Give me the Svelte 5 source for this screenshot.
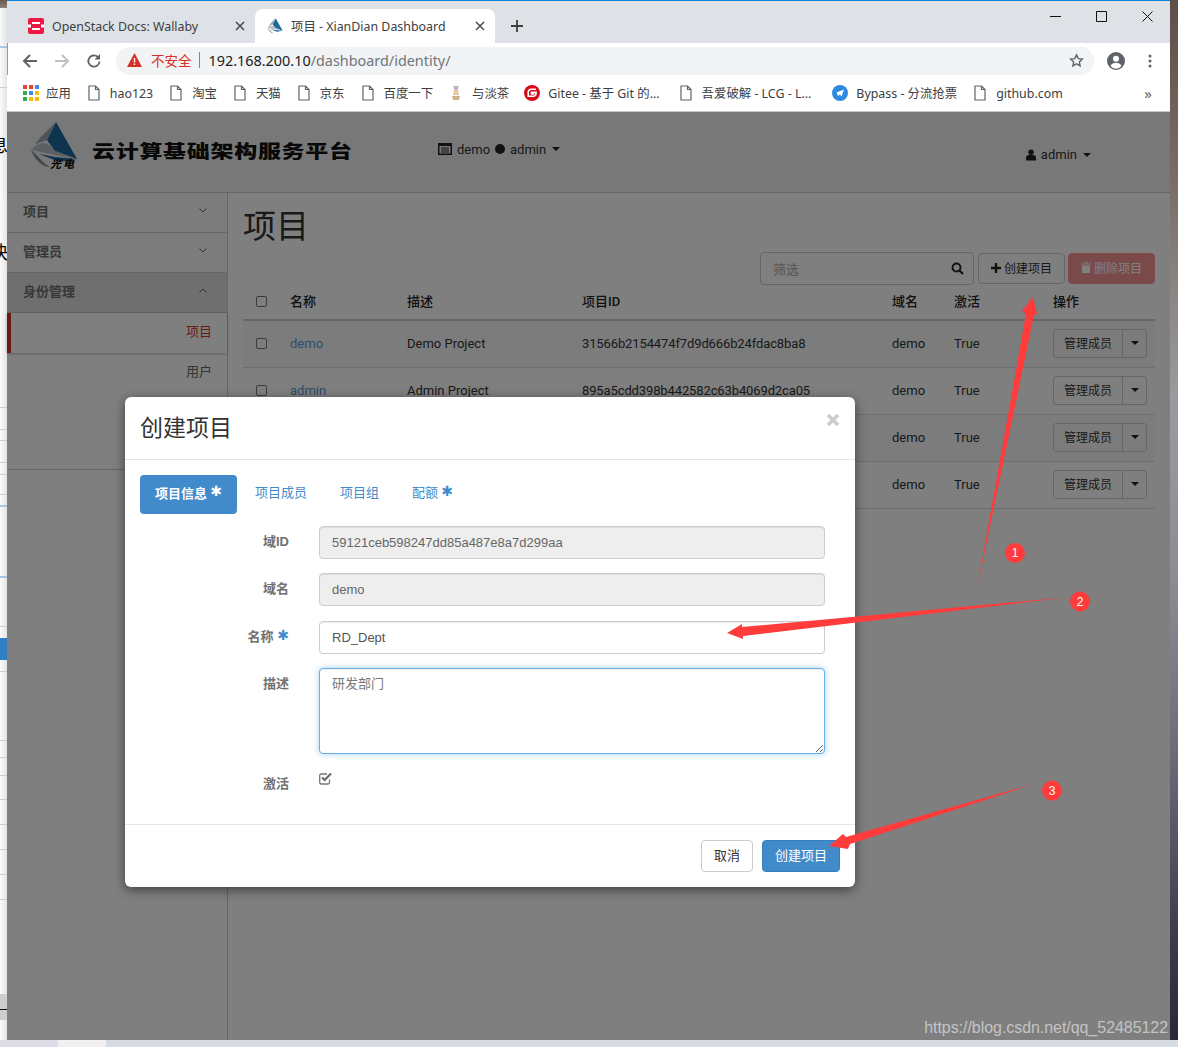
<script>
  // left edge: other window peeking out behind the browser
  const edge = [
    [8, 'brown'], [40, 'blue'], [40, 'line'], [320, 'line'], [22, 'line'],
    [11, 'line'], [22, 'line'], [12, 'line'], [20, 'line'], [12, 'blue'],
    [71, 'blue'], [49, 'line'], [11, ''], [22, 'solid'], [12, 'line'],
    [69, 'line'], [17, 'line'], [18, 'line'], [24, 'line'], [25, 'line'],
    [25, 'line'], [25, 'line'], [25, 'line'], [94, ''], [16, 'gray ink'],
    [10, 'gray'], [20, '']
  ]
  const bookmarks = [
    { icon: 'doc', text: 'hao123' },
    { icon: 'doc', text: '淘宝' },
    { icon: 'doc', text: '天猫' },
    { icon: 'doc', text: '京东' },
    { icon: 'doc', text: '百度一下' },
    { icon: 'tea', text: '与淡茶' },
    { icon: 'gitee', text: 'Gitee - 基于 Git 的...', pad: 3 },
    { icon: 'doc', text: '吾爱破解 - LCG - L...', pad: 6 },
    { icon: 'bypass', text: 'Bypass - 分流抢票' },
    { icon: 'doc', text: 'github.com' }
  ]
  // the last two rows sit behind the dialog, only their right side shows
  const projects = [
    { name: 'demo', desc: 'Demo Project', id: '31566b2154474f7d9d666b24fdac8ba8' },
    { name: 'admin', desc: 'Admin Project', id: '895a5cdd398b442582c63b4069d2ca05' },
    { name: '', desc: '', id: '' },
    { name: '', desc: '', id: '' }
  ]
  const dots = ['#ea4335', '#ea4335', '#4285f4', '#34a853', '#4285f4', '#fbbc05', '#34a853', '#fbbc05', '#fbbc05']
</script>

{#snippet xian(size)}
  <svg width={size} height={size} viewBox="0 0 48 48">
    <path d="M26 1 47 38 25 30 17 19Z" fill="#1b6a9c" />
    <path d="M26 1 17 19 5 23C12 14 20 7 26 1Z" fill="#9aa6b4" />
    <path d="M1 29C8 21 17 19 25 30L47 38C32 35 15 32 1 29Z" fill="#b9bfc8" />
    <path d="M1 29C8 34 12 42 20 46 12 46 5 39 1 29Z" fill="#8d9298" />
    <path d="M9 33 25 36 47 38 30 41Z" fill="#1b6a9c" />
  </svg>
{/snippet}

{#snippet doc()}
  <svg width="16" height="16" viewBox="0 0 16 16" fill="none" stroke="#5f6368" stroke-width="1.2">
    <path d="M3 1h6.500L13 4.500V15H3ZM9.500 1v3.500H13" />
  </svg>
{/snippet}

<div class="desk">
  <div class="top">
    <div class="edge">
      {#each edge as [h, kind]}
        <div class={kind} style="height:{h}px"></div>
      {/each}
      <span class="peek one">息</span>
      <span class="peek two">快</span>
    </div>

    <div class="win">
      <div class="tabstrip">
        <div class="tab">
          <svg width="16" height="16" viewBox="0 0 16 16">
            <rect width="16" height="16" rx="2" fill="#ed1944" />
            <path d="M4 4h8v2H4ZM4 10h8v2H4Z" fill="#fff" />
            <path d="M0 6.500h3v3H0ZM13 6.500h3v3h-3Z" fill="#fff" />
          </svg>
          <span class="tabtext">OpenStack Docs: Wallaby</span>
          <svg class="x" width="10" height="10" viewBox="0 0 10 10"><path d="M1 1l8 8M9 1l-8 8" stroke="#45484c" stroke-width="1.500" /></svg>
        </div>
        <div class="tab on">
          {@render xian(16)}
          <span class="tabtext">项目 - XianDian Dashboard</span>
          <svg class="x" width="10" height="10" viewBox="0 0 10 10"><path d="M1 1l8 8M9 1l-8 8" stroke="#45484c" stroke-width="1.500" /></svg>
        </div>
        <svg class="newtab" width="12" height="12" viewBox="0 0 12 12"><path d="M6 0v12M0 6h12" stroke="#3c4043" stroke-width="1.800" /></svg>
        <div class="winbtns">
          <svg width="11" height="11" viewBox="0 0 11 11"><path d="M0 5.500h11" stroke="#111" /></svg>
          <svg width="11" height="11" viewBox="0 0 11 11"><path d="M.5.500h10v10H.500Z" stroke="#111" fill="none" /></svg>
          <svg width="11" height="11" viewBox="0 0 11 11"><path d="M.5.500l10 10M10.500.500l-10 10" stroke="#111" fill="none" /></svg>
        </div>
      </div>

      <div class="toolbar">
        <svg width="16" height="16" viewBox="0 0 16 16"><path d="M15 8H2M8 2 2 8l6 6" stroke="#5f6368" stroke-width="2" fill="none" /></svg>
        <svg width="16" height="16" viewBox="0 0 16 16"><path d="M1 8h13M8 2l6 6-6 6" stroke="#bdc1c6" stroke-width="2" fill="none" /></svg>
        <svg width="16" height="16" viewBox="0 0 16 16"><path d="M13.500 8.500A5.600 5.600 0 1 1 11.800 4" stroke="#5f6368" stroke-width="1.800" fill="none" /><path d="M14 1v5.500H8.500Z" fill="#5f6368" /></svg>
        <div class="omni">
          <svg width="15" height="14" viewBox="0 0 15 14"><path d="M7.500 0 15 14H0Z" fill="#d93025" /><path d="M6.800 5h1.400v4.500H6.800ZM6.800 10.500h1.400V12H6.800Z" fill="#fff" /></svg>
          <span class="unsafe">不安全</span>
          <i class="sep"></i>
          <span class="url"><b>192.168.200.10</b>/dashboard/identity/</span>
          <svg class="star" width="15" height="15" viewBox="0 0 24 24"><path d="M12 3l2.800 6 6.500.8-4.800 4.400 1.300 6.500L12 17.400 6.200 20.700l1.300-6.500L2.700 9.800 9.200 9Z" fill="none" stroke="#5f6368" stroke-width="2.200" /></svg>
        </div>
        <svg class="acct" width="18" height="18" viewBox="0 0 18 18"><circle cx="9" cy="9" r="9" fill="#5f6368" /><circle cx="9" cy="6.800" r="3" fill="#fff" /><path d="M3.500 14c1-2.500 3-3.200 5.500-3.200s4.500.7 5.500 3.200A7 7 0 0 1 3.500 14Z" fill="#fff" /></svg>
        <svg class="more" width="4" height="14" viewBox="0 0 4 14"><circle cx="2" cy="2" r="1.500" fill="#5f6368" /><circle cx="2" cy="7" r="1.500" fill="#5f6368" /><circle cx="2" cy="12" r="1.500" fill="#5f6368" /></svg>
      </div>

      <div class="marks">
        <div class="mark">
          <span class="apps">{#each dots as c}<i style="background:{c}"></i>{/each}</span>
          <span>应用</span>
        </div>
        {#each bookmarks as b}
          <div class="mark" style="padding-right:{b.pad ?? 0}px">
            {#if b.icon === 'doc'}
              {@render doc()}
            {:else if b.icon === 'tea'}
              <svg width="16" height="16" viewBox="0 0 16 16"><path d="M5 1h6L9.500 5h-3Z" fill="#b9b3c4" /><path d="M6 5h4l1 5H5Z" fill="#e8c9a0" /><path d="M4 11h8l-1 4H5Z" fill="#cdb48c" /></svg>
            {:else if b.icon === 'gitee'}
              <svg width="16" height="16" viewBox="0 0 17 17"><circle cx="8.500" cy="8.500" r="8.500" fill="#d7091c" /><path d="M12.800 4.500H7.500a3 3 0 0 0-3 3v4.500h5.300a3 3 0 0 0 3-3V7.800H8v1.600h3" fill="none" stroke="#fff" stroke-width="1.700" /></svg>
            {:else}
              <svg width="16" height="16" viewBox="0 0 16 16"><circle cx="8" cy="8" r="8" fill="#2d8ae0" /><path d="M4.500 7.500 12 4.500 9.500 11.500 8 9.500 6 11Z" fill="#fff" /></svg>
            {/if}
            <span>{b.text}</span>
          </div>
        {/each}
        <span class="chev">»</span>
      </div>

      <div class="page">
        <header>
          <div class="logo">
            {@render xian(48)}
            <span class="guang">光电</span>
          </div>
          <span class="brand">云计算基础架构服务平台</span>
          <span class="ctx">
            <svg width="14" height="12" viewBox="0 0 14 12"><path d="M0 0h14v12H0ZM1.500 3v7.500h11V3ZM3 4.500h8v1H3ZM3 6.500h8v1H3ZM3 8.500h8v1H3Z" fill="#222" fill-rule="evenodd" /></svg>
            demo
            <i class="dot"></i>
            admin
            <i class="caret"></i>
          </span>
          <span class="who">
            <svg width="10" height="12" viewBox="0 0 11 12"><circle cx="5.500" cy="3" r="3" fill="#222" /><path d="M0 12V9c0-2 1.500-3 3-3h5c1.500 0 3 1 3 3v3Z" fill="#222" /></svg>
            admin
            <i class="caret"></i>
          </span>
        </header>

        <div class="body">
          <nav>
            <div class="sec">项目<svg width="8" height="5" viewBox="0 0 8 5"><path d="M.5.500 4 4 7.500.500" stroke="#666" fill="none" /></svg></div>
            <div class="sec">管理员<svg width="8" height="5" viewBox="0 0 8 5"><path d="M.5.500 4 4 7.500.500" stroke="#666" fill="none" /></svg></div>
            <div class="sec open">身份管理<svg width="8" height="5" viewBox="0 0 8 5"><path d="M.5 4.500 4 1l3.500 3.500" stroke="#666" fill="none" /></svg></div>
            <div class="subs">
              <div class="sub active">项目</div>
              <div class="sub">用户</div>
            </div>
          </nav>

          <main>
            <h1>项目</h1>
            <div class="actions">
              <div class="filter">
                <span>筛选</span>
                <svg width="13" height="13" viewBox="0 0 13 13"><circle cx="5.500" cy="5.500" r="4" stroke="#222" stroke-width="1.900" fill="none" /><path d="M8.500 8.500 12 12" stroke="#222" stroke-width="2.200" /></svg>
              </div>
              <button class="btn"><svg width="10" height="10" viewBox="0 0 10 10"><path d="M5 0v10M0 5h10" stroke="#222" stroke-width="2.400" /></svg>创建项目</button>
              <button class="btn del"><svg width="10" height="11" viewBox="0 0 10 11"><path d="M0 1.500h10v1H0ZM3.500 0h3v1h-3ZM1 3.500h8V11H1Z" fill="#fff" /></svg>删除项目</button>
            </div>
            <table>
              <colgroup>
                <col style="width:47px" /><col style="width:117px" /><col style="width:175px" />
                <col style="width:310px" /><col style="width:62px" /><col style="width:99px" /><col />
              </colgroup>
              <thead>
                <tr>
                  <th><i class="box"></i></th>
                  <th>名称</th><th>描述</th><th>项目ID</th><th>域名</th><th>激活</th><th>操作</th>
                </tr>
              </thead>
              <tbody>
                {#each projects as p}
                  <tr>
                    <td>{#if p.name}<i class="box"></i>{/if}</td>
                    <td><span class="link">{p.name}</span></td>
                    <td>{p.desc}</td>
                    <td class="hash">{p.id}</td>
                    <td>demo</td>
                    <td>True</td>
                    <td>
                      <div class="split"><span>管理成员</span><span class="drop"><i class="caret"></i></span></div>
                    </td>
                  </tr>
                {/each}
              </tbody>
            </table>
          </main>
        </div>
        <div class="dim"></div>
      </div>
    </div>

    <div class="wall"></div>
  </div>
  <div class="taskbar"><i></i><i class="pale"></i></div>

  <section class="modal">
    <div class="mhead">
      <h2>创建项目</h2>
      <svg class="close" width="14" height="14" viewBox="0 0 14 14"><path d="M2 2l10 10M12 2 2 12" stroke="#ccc" stroke-width="3.600" /></svg>
    </div>
    <div class="mbody">
      <div class="pills">
        <span class="pill on">项目信息<em>✱</em></span>
        <span class="pill">项目成员</span>
        <span class="pill">项目组</span>
        <span class="pill">配额<em>✱</em></span>
      </div>
      <div class="row">
        <label for="f1">域ID</label>
        <input id="f1" disabled value="59121ceb598247dd85a487e8a7d299aa" />
      </div>
      <div class="row">
        <label for="f2">域名</label>
        <input id="f2" disabled value="demo" />
      </div>
      <div class="row">
        <label for="f3">名称 <em>✱</em></label>
        <input id="f3" value="RD_Dept" />
      </div>
      <div class="row">
        <label for="f4">描述</label>
        <textarea id="f4">研发部门</textarea>
      </div>
      <div class="row check">
        <span class="lab">激活</span>
        <svg width="13" height="13" viewBox="0 0 13 13"><path d="M10.500 7.500V10.500a1.500 1.500 0 0 1-1.500 1.500H2A1.500 1.500 0 0 1 .7 10.500V3.500A1.500 1.500 0 0 1 2 2h6" fill="none" stroke="#777" stroke-width="1.300" /><path d="M3 5.500 5.700 8 12 1.500" fill="none" stroke="#666" stroke-width="2" /></svg>
      </div>
    </div>
    <div class="mfoot">
      <button class="plain">取消</button>
      <button class="primary">创建项目</button>
    </div>
  </section>

  <svg class="marks-red" width="1178" height="1047" viewBox="0 0 1178 1047">
    <g fill="#ff3b3b">
      <path d="M977 589 1026 314 1022 311 1033 297 1037 314 1034 315Z" />
      <path d="M1070 597 743 636 743 639 727 633 742 624 742 627Z" />
      <path d="M1037 783 850 844 848 849 829 846 843 834 846 837Z" />
      <circle cx="1015" cy="553" r="10" />
      <circle cx="1080" cy="601.500" r="10" />
      <circle cx="1052" cy="790.500" r="10" />
    </g>
    <g fill="#fff" font-size="12" text-anchor="middle" font-family="'Liberation Sans', sans-serif">
      <text x="1015" y="557">1</text>
      <text x="1080" y="606">2</text>
      <text x="1052" y="795">3</text>
    </g>
  </svg>

  <span class="water">https://blog.csdn.net/qq_52485122</span>
</div>

<style>
  :global(body) {
    margin: 0;
    background: #808080;
  }
  .desk {
    position: relative;
    width: 1178px;
    height: 1047px;
    overflow: hidden;
    display: flex;
    flex-direction: column;
    font-family: Roboto, "Noto Sans CJK SC", sans-serif;
    font-size: 13px;
  }
  .top {
    display: flex;
    height: 1040px;
  }

  /* what shows around the browser */
  .edge {
    position: relative;
    width: 8px;
    flex-shrink: 0;
    overflow: hidden;
    background: linear-gradient(to right, #fbfbfb, #e4e4e4);
    border-right: 1px solid #999;
    box-sizing: border-box;
  }
  .edge .brown { background: linear-gradient(#6a5a50, #8d8178); }
  .edge .line { border-bottom: 1px solid #cfcfcf; box-sizing: border-box; }
  .edge .blue { border-bottom: 2px solid #a5c6e4; box-sizing: border-box; }
  .edge .solid { background: #2f7dc4; }
  .edge .gray { background: #cdcdcd; }
  .edge .ink { border-bottom: 1px solid #111; box-sizing: border-box; }
  .peek {
    position: absolute;
    left: -10px;
    font-size: 18px;
    line-height: 20px;
    color: #000;
  }
  .peek.one { top: 136px; }
  .peek.two { top: 243px; }
  .wall {
    flex: 1;
    background: linear-gradient(#5c5048 0, #7a6f68 18%, #9b9a9e 38%, #8e8d95 55%, #6f6c78 72%, #3e3a4c 90%, #2a2838 100%);
  }
  .taskbar {
    flex: 1;
    display: flex;
    background: #d6dce2;
  }
  .taskbar i {
    width: 58px;
    background: #dcdbe6;
  }
  .taskbar i.pale {
    width: 48px;
    background: #f0f0f2;
  }

  .win {
    width: 1163px;
    margin-left: -1px;
    display: flex;
    flex-direction: column;
    background: #fff;
    font-family: "Noto Sans", "Noto Sans CJK SC", sans-serif;
  }
  .tabstrip {
    height: 42px;
    background: #dee1e6;
    border-top: 1px solid #0b84d9;
    display: flex;
    align-items: flex-end;
    position: relative;
  }
  .tab {
    width: 240px;
    height: 34px;
    display: flex;
    align-items: center;
    padding: 0 10px 0 21px;
    box-sizing: border-box;
    gap: 8px;
    color: #3c4043;
    flex-shrink: 0;
  }
  .tab:first-child { width: 248px; }
  .tab.on {
    background: #fff;
    border-radius: 8px 8px 0 0;
    padding-left: 12px;
  }
  .tabtext {
    flex: 1;
    white-space: nowrap;
    overflow: hidden;
    font-size: 12.400px;
  }
  .x { flex-shrink: 0; }
  .newtab {
    margin: 0 0 11px 16px;
  }
  .winbtns {
    position: absolute;
    top: 10px;
    right: 17px;
    display: flex;
    gap: 35px;
  }
  .toolbar {
    height: 32px;
    display: flex;
    align-items: center;
    padding: 4px 0 0 15px;
    box-sizing: border-box;
    gap: 16px;
    background: #fff;
  }
  .omni {
    width: 978px;
    height: 28px;
    margin-left: -2px;
    background: #f1f3f4;
    border-radius: 14px;
    display: flex;
    align-items: center;
    padding: 0 10px 2px 11px;
    box-sizing: border-box;
    flex-shrink: 0;
  }
  .unsafe {
    color: #d93025;
    font-size: 13.500px;
    margin-left: 9px;
  }
  .sep {
    width: 1px;
    height: 16px;
    background: #80868b;
    margin: 0 9px 0 7px;
  }
  .url {
    color: #70757a;
    font-size: 14.400px;
    flex: 1;
  }
  .url b {
    font-weight: 400;
    color: #202124;
  }
  .acct { margin-left: -3px; }
  .more { margin-left: 7px; }
  .marks {
    height: 36px;
    display: flex;
    align-items: center;
    padding-left: 15px;
    gap: 15px;
    background: #fff;
    border-bottom: 1px solid #c6c6c6;
    color: #3c4043;
    font-size: 12.400px;
    position: relative;
  }
  .mark {
    display: flex;
    align-items: center;
    gap: 8px;
    white-space: nowrap;
  }
  .apps {
    display: grid;
    grid-template-columns: repeat(3, 4px);
    gap: 2px;
    width: 16px;
    padding-left: 1px;
    box-sizing: border-box;
  }
  .apps i { height: 4px; }
  .chev {
    position: absolute;
    right: 18px;
    top: 8px;
    font-size: 15px;
    color: #5f6368;
  }

  /* dashboard behind the dialog */
  .page {
    flex: 1;
    position: relative;
    display: flex;
    flex-direction: column;
    background: #fff;
    font-family: Roboto, "Noto Sans CJK SC", sans-serif;
    color: #444;
  }
  .dim {
    position: absolute;
    inset: 0;
    background: rgba(0, 0, 0, 0.5);
  }
  header {
    height: 80px;
    flex-shrink: 0;
    display: flex;
    align-items: center;
    background: #f0f0f0;
    border-bottom: 1px solid #ccc;
  }
  .logo {
    position: relative;
    width: 48px;
    height: 48px;
    margin: -15px 0 0 23px;
  }
  .guang {
    position: absolute;
    left: 20px;
    top: 34px;
    font-size: 11px;
    font-weight: 700;
    font-style: italic;
    letter-spacing: 2px;
    color: #000;
    white-space: nowrap;
  }
  .brand {
    margin: -5px 0 0 14px;
    width: 346px;
    font-size: 23px;
    font-weight: 900;
    letter-spacing: 0.700px;
    color: #111;
    white-space: nowrap;
    flex-shrink: 0;
    transform: scaleY(0.78);
  }
  .ctx, .who {
    display: flex;
    align-items: center;
    gap: 5px;
    color: #333;
    font-size: 13px;
  }
  .ctx { margin-top: -6px; }
  .who { margin: 5px 79px 0 auto; }
  .dot {
    width: 10px;
    height: 10px;
    border-radius: 50%;
    background: #222;
  }
  .caret {
    display: inline-block;
    width: 0;
    height: 0;
    border: 4px solid transparent;
    border-top-color: #222;
    border-bottom: 0;
    margin-left: 1px;
  }
  .body {
    flex: 1;
    display: flex;
  }
  nav {
    width: 220px;
    flex-shrink: 0;
    border-right: 1px solid #ccc;
  }
  .sec {
    height: 35px;
    display: flex;
    align-items: center;
    justify-content: space-between;
    padding: 0 20px 4px 16px;
    background: #f8f8f8;
    border-bottom: 1px solid #ccc;
    font-weight: 700;
    color: #6e6e6e;
  }
  .sec.open { background: #dfdfdf; }
  .subs {
    height: 157px;
    border-bottom: 1px solid #ccc;
    box-sizing: border-box;
  }
  .sub {
    height: 40px;
    line-height: 38px;
    text-align: right;
    padding-right: 15px;
    color: #666;
  }
  .sub.active {
    color: #d9342b;
    border-left: 4px solid #d9342b;
    box-shadow: 0 1px 3px rgba(0, 0, 0, 0.25);
    box-sizing: border-box;
    width: 220px;
  }
  main {
    flex: 1;
    padding: 0 15px;
    min-width: 0;
  }
  h1 {
    margin: 0;
    height: 59px;
    font-size: 33px;
    line-height: 67px;
    font-weight: 400;
    color: #333;
  }
  .actions {
    height: 31px;
    display: flex;
    justify-content: flex-end;
    gap: 3px;
  }
  .filter {
    width: 214px;
    height: 33px;
    box-sizing: border-box;
    border: 1px solid #ccc;
    border-radius: 4px;
    margin-right: 1px;
    display: flex;
    align-items: center;
    justify-content: space-between;
    padding: 0 9px 1px 12px;
    color: #aaa;
  }
  .btn {
    width: 87px;
    height: 31px;
    margin-top: 1px;
    padding: 0 0 2px;
    border: 1px solid #ccc;
    border-radius: 4px;
    background: transparent;
    font: inherit;
    font-size: 12px;
    color: #333;
    display: flex;
    align-items: center;
    justify-content: center;
    gap: 3px;
  }
  .btn.del {
    background: #f49494;
    border-color: #f49494;
    color: #fff;
  }
  table {
    width: 912px;
    table-layout: fixed;
    border-collapse: collapse;
    position: relative;
  }
  th {
    height: 34px;
    text-align: left;
    font-weight: 500;
    color: #222;
    padding: 0 0 2px;
    border-bottom: 2px solid #ccc;
  }
  th .box { margin-top: 2px; }
  td {
    height: 44px;
    padding: 0 0 2px;
    color: #333;
    border-bottom: 1px solid #ddd;
  }
  td.hash { letter-spacing: -0.120px; }
  tbody tr:nth-child(odd) td { background: #f9f9f9; }
  .box {
    display: block;
    width: 9px;
    height: 9px;
    margin-left: 13px;
    border: 1px solid #777;
    border-radius: 2px;
  }
  .link { color: #5b9bd8; }
  .split {
    display: flex;
    width: 94px;
    height: 29px;
    box-sizing: border-box;
    border: 1px solid #ccc;
    border-radius: 3px;
    color: #333;
    font-size: 12px;
    align-items: stretch;
  }
  .split span {
    display: flex;
    align-items: center;
    justify-content: center;
    width: 68px;
    padding-bottom: 2px;
    box-sizing: border-box;
  }
  .split .drop {
    flex: 1;
    border-left: 1px solid #ccc;
    padding-bottom: 0;
  }

  /* dialog */
  .modal {
    position: absolute;
    left: 125px;
    top: 397px;
    width: 730px;
    height: 490px;
    background: #fff;
    border-radius: 6px;
    box-shadow: 0 3px 12px rgba(0, 0, 0, 0.5);
    display: flex;
    flex-direction: column;
    font-family: "Liberation Sans", "Noto Sans CJK SC", sans-serif;
    color: #555;
  }
  .mhead {
    height: 62px;
    flex-shrink: 0;
    border-bottom: 1px solid #e5e5e5;
    padding: 0 15px;
    display: flex;
    justify-content: space-between;
  }
  h2 {
    margin: 0;
    font-size: 23px;
    font-weight: 400;
    line-height: 62px;
    color: #333;
  }
  .close {
    margin-top: 16px;
  }
  .mbody {
    flex: 1;
    padding: 15px;
  }
  .pills {
    display: flex;
    height: 39px;
    margin-bottom: 12px;
  }
  .pill {
    display: flex;
    align-items: center;
    justify-content: center;
    gap: 3px;
    border-radius: 4px;
    padding: 0 15px 6px;
    margin-left: 3px;
    color: #428bca;
    white-space: nowrap;
    font-family: Roboto, "Noto Sans CJK SC", sans-serif;
  }
  .pill.on {
    margin-left: 0;
    padding-bottom: 5px;
    background: #428bca;
    color: #fff;
    font-weight: 700;
  }
  em {
    display: inline-block;
    width: 12px;
    text-align: center;
    font-style: normal;
    font-family: "DejaVu Sans", sans-serif;
    font-size: 14px;
    line-height: 14px;
    color: #428bca;
    position: relative;
    top: -1px;
  }
  .pill.on em { color: #fff; }
  .row {
    display: flex;
    margin-bottom: 14px;
  }
  .row:nth-child(3) { margin-bottom: 15px; }
  label, .lab {
    width: 149px;
    margin-right: 30px;
    padding-top: 5px;
    text-align: right;
    font-weight: 700;
    color: #707070;
    flex-shrink: 0;
  }
  input, textarea {
    width: 506px;
    height: 33px;
    margin: 0;
    box-sizing: border-box;
    border: 1px solid #ccc;
    border-radius: 4px;
    padding: 6px 12px;
    font: inherit;
    color: #555;
    background: #fff;
    outline: none;
    box-shadow: inset 0 1px 1px rgba(0, 0, 0, 0.075);
  }
  input:disabled {
    background: #eee;
    color: #666;
    -webkit-text-fill-color: #666;
    opacity: 1;
  }
  textarea {
    height: 86px;
    padding-top: 4px;
    border-color: #66afe9;
    box-shadow: inset 0 1px 1px rgba(0, 0, 0, 0.075), 0 0 6px rgba(102, 175, 233, 0.6);
    color: #777;
  }
  .check svg { margin-top: 4px; }
  .mfoot {
    height: 63px;
    flex-shrink: 0;
    border-top: 1px solid #e5e5e5;
    padding: 15px 15px 0 0;
    box-sizing: border-box;
    display: flex;
    justify-content: flex-end;
    gap: 9px;
  }
  .mfoot button {
    height: 32px;
    border-radius: 4px;
    font: inherit;
    padding: 0 0 3px;
  }
  .plain {
    width: 52px;
    background: #fff;
    border: 1px solid #ccc;
    color: #333;
  }
  .primary {
    width: 78px;
    background: #428bca;
    border: 1px solid #357ebd;
    color: #fff;
  }

  .marks-red {
    position: absolute;
    left: 0;
    top: 0;
    pointer-events: none;
  }
  .water {
    position: absolute;
    right: 10px;
    top: 1019px;
    font-family: "Liberation Sans", sans-serif;
    font-size: 15.900px;
    color: #c4c4c4;
    white-space: nowrap;
  }
</style>
